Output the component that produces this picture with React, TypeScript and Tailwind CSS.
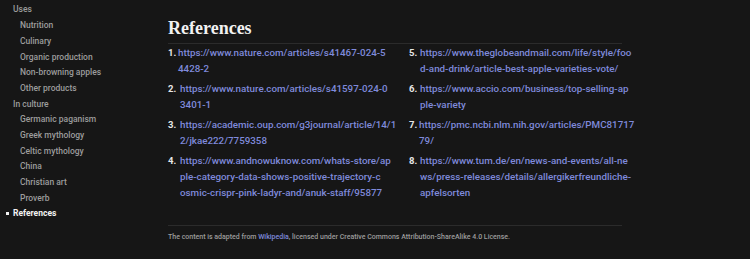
import React from "react";

const side: { label: string; level: number; active?: boolean }[] = [
  { label: "Uses", level: 0 },
  { label: "Nutrition", level: 1 },
  { label: "Culinary", level: 1 },
  { label: "Organic production", level: 1 },
  { label: "Non-browning apples", level: 1 },
  { label: "Other products", level: 1 },
  { label: "In culture", level: 0 },
  { label: "Germanic paganism", level: 1 },
  { label: "Greek mythology", level: 1 },
  { label: "Celtic mythology", level: 1 },
  { label: "China", level: 1 },
  { label: "Christian art", level: 1 },
  { label: "Proverb", level: 1 },
  { label: "References", level: 0, active: true },
];

type Ref = { n: number; lines: string[]; url: string; gap: string };

const col1: Ref[] = [
  {
    n: 1,
    url: "https://www.nature.com/articles/s41467-024-54428-2",
    lines: ["https://www.nature.com/articles/s41467-024-5", "4428-2"],
    gap: "w-[10px]",
  },
  {
    n: 2,
    url: "https://www.nature.com/articles/s41597-024-03401-1",
    lines: ["https://www.nature.com/articles/s41597-024-0", "3401-1"],
    gap: "w-[12px]",
  },
  {
    n: 3,
    url: "https://academic.oup.com/g3journal/article/14/12/jkae222/7759358",
    lines: ["https://academic.oup.com/g3journal/article/14/1", "2/jkae222/7759358"],
    gap: "w-[12px]",
  },
  {
    n: 4,
    url: "https://www.andnowuknow.com/whats-store/apple-category-data-shows-positive-trajectory-cosmic-crispr-pink-ladyr-and/anuk-staff/95877",
    lines: [
      "https://www.andnowuknow.com/whats-store/ap",
      "ple-category-data-shows-positive-trajectory-c",
      "osmic-crispr-pink-ladyr-and/anuk-staff/95877",
    ],
    gap: "w-[12px]",
  },
];

const col2: Ref[] = [
  {
    n: 5,
    url: "https://www.theglobeandmail.com/life/style/food-and-drink/article-best-apple-varieties-vote/",
    lines: ["https://www.theglobeandmail.com/life/style/foo", "d-and-drink/article-best-apple-varieties-vote/"],
    gap: "w-[11px]",
  },
  {
    n: 6,
    url: "https://www.accio.com/business/top-selling-apple-variety",
    lines: ["https://www.accio.com/business/top-selling-ap", "ple-variety"],
    gap: "w-[11px]",
  },
  {
    n: 7,
    url: "https://pmc.ncbi.nlm.nih.gov/articles/PMC8171779/",
    lines: ["https://pmc.ncbi.nlm.nih.gov/articles/PMC81717", "79/"],
    gap: "w-[10px]",
  },
  {
    n: 8,
    url: "https://www.tum.de/en/news-and-events/all-news/press-releases/details/allergikerfreundliche-apfelsorten",
    lines: [
      "https://www.tum.de/en/news-and-events/all-ne",
      "ws/press-releases/details/allergikerfreundliche-",
      "apfelsorten",
    ],
    gap: "w-[11px]",
  },
];

function RefList({ items }: { items: Ref[] }) {
  return (
    <ol className="flex flex-col gap-[4px]">
      {items.map((r) => (
        <li key={r.n} className="flex text-[9.8px] leading-[16px]">
          <span className={`${r.gap} shrink-0 text-[9.5px] font-bold text-[#e6e6e6]`}>{r.n}.</span>
          <a href={r.url} className="whitespace-nowrap font-medium text-[#7f8adb]">
            {r.lines.map((l, i) => (
              <span key={i} className="block">
                {l}
              </span>
            ))}
          </a>
        </li>
      ))}
    </ol>
  );
}

export default function App() {
  return (
    <div
      className="flex h-[259px] w-[750px] overflow-hidden bg-[#161616]"
      style={{ fontFamily: 'Roboto, "Liberation Sans", Arial, sans-serif' }}
    >
      <nav className="w-[168px] shrink-0 pt-[2px]">
        {side.map((s) => (
          <div
            key={s.label}
            className={`relative flex h-[15.7px] items-center text-[8.5px] ${
              s.level === 0 ? "pl-[13px]" : "pl-[20px]"
            } ${s.active ? "font-bold text-[#f2f2f2]" : "font-medium text-[#9c9c9c]"}`}
          >
            {s.active && (
              <span className="absolute left-[6px] top-[6.5px] h-[3px] w-[3px] bg-[#f2f2f2]" />
            )}
            {s.label}
          </div>
        ))}
      </nav>
      <main className="w-[454px] shrink-0">
        <h1
          className="mt-[16px] border-b border-[#2b2b2b] pb-[3px] text-[18px] font-bold leading-[24px] text-[#f2f2f2]"
          style={{ fontFamily: '"Liberation Serif", "Times New Roman", serif' }}
        >
          References
        </h1>
        <div className="mt-[1px] grid grid-cols-[241px_213px]">
          <RefList items={col1} />
          <RefList items={col2} />
        </div>
        <div className="mt-[24px] border-t border-[#2b2b2b] pt-[5px] text-[7px] font-medium leading-[12px] text-[#9c9c9c]">
          The content is adapted from <a className="text-[#7f8adb]">Wikipedia</a>, licensed under Creative
          Commons Attribution-ShareAlike 4.0 License.
        </div>
      </main>
    </div>
  );
}
